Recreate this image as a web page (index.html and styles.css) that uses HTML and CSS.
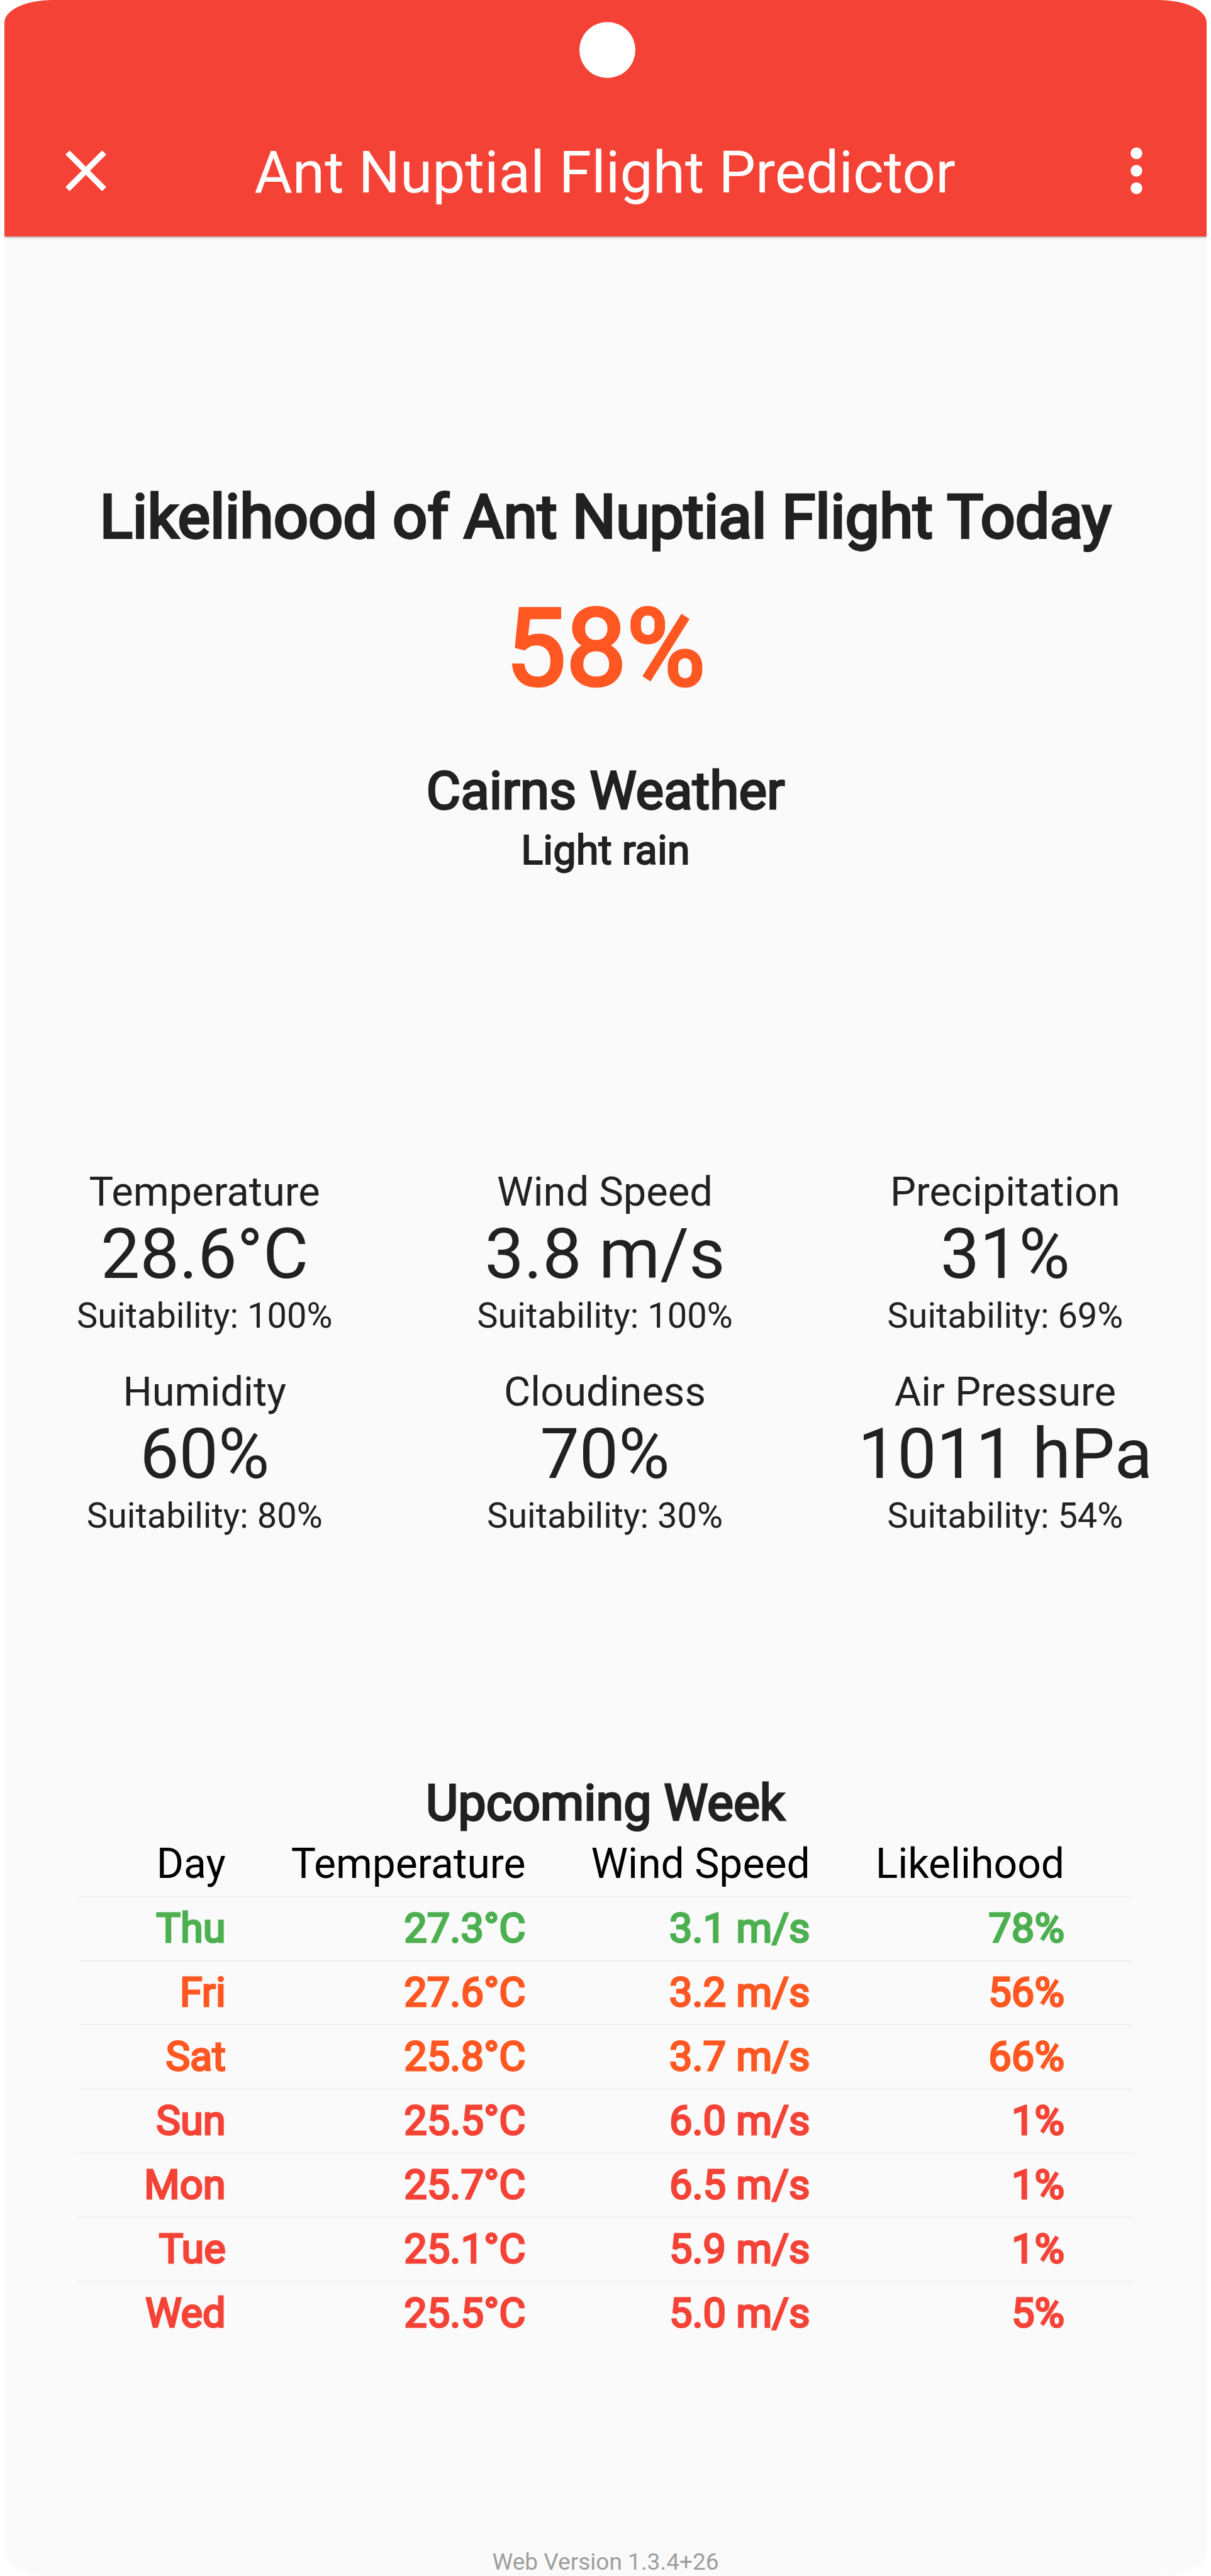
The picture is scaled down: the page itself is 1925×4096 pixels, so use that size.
FILE: index.html
```html
<!DOCTYPE html>
<html lang="en">
<head>
<meta charset="utf-8">
<title>Ant Nuptial Flight Predictor</title>
<link rel="stylesheet" href="styles.css">
</head>
<body>
<div class="app">
  <header class="app-bar">
    <div class="status-bar"><span class="camera"></span></div>
    <div class="toolbar">
      <button class="icon-button" type="button" aria-label="Close">
        <svg class="icon" viewBox="0 0 24 24"><path d="M19 6.41L17.59 5 12 10.59 6.41 5 5 6.41 10.59 12 5 17.59 6.41 19 12 13.41 17.59 19 19 17.59 13.41 12z"/></svg>
      </button>
      <div class="app-title">Ant Nuptial Flight Predictor</div>
      <button class="icon-button" type="button" aria-label="More options">
        <svg class="icon" viewBox="0 0 24 24"><path d="M12 8c1.1 0 2-.9 2-2s-.9-2-2-2-2 .9-2 2 .9 2 2 2zm0 2c-1.1 0-2 .9-2 2s.9 2 2 2 2-.9 2-2-.9-2-2-2zm0 6c-1.1 0-2 .9-2 2s.9 2 2 2 2-.9 2-2-.9-2-2-2z"/></svg>
      </button>
    </div>
  </header>
  <main class="content">
    <section class="today">
      <h1 class="today-title strong">Likelihood of Ant Nuptial Flight Today</h1>
      <p class="today-value strong">58%</p>
      <h2 class="place strong">Cairns Weather</h2>
      <p class="condition strong">Light rain</p>
    </section>
    <section class="metrics">
      <div class="metric"><div class="label">Temperature</div><div class="value">28.6°C</div><div class="note">Suitability: 100%</div></div>
      <div class="metric"><div class="label">Wind Speed</div><div class="value">3.8 m/s</div><div class="note">Suitability: 100%</div></div>
      <div class="metric"><div class="label">Precipitation</div><div class="value">31%</div><div class="note">Suitability: 69%</div></div>
      <div class="metric"><div class="label">Humidity</div><div class="value">60%</div><div class="note">Suitability: 80%</div></div>
      <div class="metric"><div class="label">Cloudiness</div><div class="value">70%</div><div class="note">Suitability: 30%</div></div>
      <div class="metric"><div class="label">Air Pressure</div><div class="value">1011 hPa</div><div class="note">Suitability: 54%</div></div>
    </section>
    <section class="week">
      <h2 class="week-title strong" id="week-title">Upcoming Week</h2>
      <table class="forecast" aria-labelledby="week-title">
        <thead>
          <tr><th scope="col">Day</th><th scope="col">Temperature</th><th scope="col">Wind Speed</th><th scope="col">Likelihood</th></tr>
        </thead>
        <tbody class="strong">
          <tr class="high"><td>Thu</td><td>27.3°C</td><td>3.1 m/s</td><td>78%</td></tr>
          <tr class="medium"><td>Fri</td><td>27.6°C</td><td>3.2 m/s</td><td>56%</td></tr>
          <tr class="medium"><td>Sat</td><td>25.8°C</td><td>3.7 m/s</td><td>66%</td></tr>
          <tr class="low"><td>Sun</td><td>25.5°C</td><td>6.0 m/s</td><td>1%</td></tr>
          <tr class="low"><td>Mon</td><td>25.7°C</td><td>6.5 m/s</td><td>1%</td></tr>
          <tr class="low"><td>Tue</td><td>25.1°C</td><td>5.9 m/s</td><td>1%</td></tr>
          <tr class="low"><td>Wed</td><td>25.5°C</td><td>5.0 m/s</td><td>5%</td></tr>
        </tbody>
      </table>
    </section>
  </main>
  <footer class="version">Web Version 1.3.4+26</footer>
</div>
</body>
</html>
```
FILE: styles.css
```css
* { box-sizing: border-box; }

body {
  margin: 0;
  padding: 0 7px;
  background: #fff;
  color: #212121;
  font-family: Roboto, "Liberation Sans", sans-serif;
}

h1, h2, p { margin: 0; font-weight: 400; }

/* Emboldened regular face: keeps the regular advance widths */
.strong { -webkit-text-stroke: 3px currentColor; }

.app {
  display: flex;
  flex-direction: column;
  min-height: 100vh;
  overflow: hidden;
  background: #fafafa;
  border-radius: 76px / 36px;
  text-align: center;
}

.app-bar {
  position: relative;
  background: #f44336;
  color: #fff;
  box-shadow: 0 1px 4px rgba(0, 0, 0, 0.4);
}

.status-bar {
  display: flex;
  justify-content: center;
  height: 167px;
  padding: 35px 0 0 6px;
}

.camera {
  width: 89px;
  height: 89px;
  border-radius: 50%;
  background: #fff;
}

.toolbar {
  display: flex;
  align-items: center;
  justify-content: space-between;
  height: 209px;
  padding: 0 56px 0 74px;
}

.icon-button {
  display: flex;
  width: 111px;
  height: 111px;
  padding: 0;
  border: 0;
  background: none;
  color: inherit;
}

.icon { width: 100%; height: 100%; fill: currentColor; }

.app-title { padding: 6px 20px 0 0; font-size: 93px; line-height: 110px; }

.content { padding-top: 389px; }

.today-title {
  font-size: 97px;
  line-height: 114px;
  -webkit-text-stroke-width: 4px;
}

.today-value {
  margin: 54px 0 80px;
  color: #ff5722;
  font-size: 171px;
  line-height: 196px;
  -webkit-text-stroke-width: 5px;
}

.place { font-size: 84px; line-height: 98px; }

.condition {
  margin-top: 7px;
  font-size: 65px;
  line-height: 76px;
  -webkit-text-stroke-width: 2px;
}

.metrics {
  display: grid;
  grid-template-columns: repeat(3, 1fr);
  row-gap: 50px;
  margin-top: 469px;
  padding-right: 2px;
}

.label { font-size: 65px; line-height: 72px; }
.value { font-size: 111px; line-height: 126px; white-space: nowrap; }
.note { font-size: 56px; line-height: 70px; }

.week { margin-top: 376px; }

.week-title { font-size: 79px; line-height: 92px; }

.forecast {
  margin: 0 auto;
  border-collapse: collapse;
  font-size: 65px;
  line-height: 76px;
  text-align: right;
  white-space: nowrap;
}

.forecast th { height: 102px; padding: 0 52px; color: #000; font-size: 66px; font-weight: 400; }
.forecast td { height: 102px; padding: 0 52px; border-top: 1px solid #e6e6e6; }
.forecast th:first-child, .forecast td:first-child { padding-left: 104px; }
.forecast th:last-child, .forecast td:last-child { padding-right: 108px; }

.high { color: #4caf50; }
.medium { color: #ff5722; }
.low { color: #f44336; }

.version {
  margin-top: auto;
  color: #9e9e9e;
  font-size: 37px;
  line-height: 44px;
}
```
